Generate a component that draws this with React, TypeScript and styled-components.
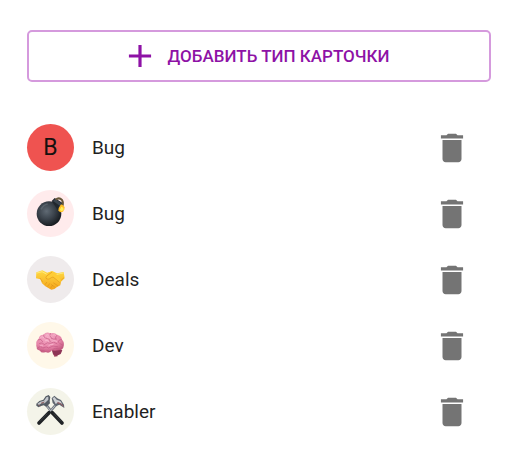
import React from "react";
import styled, { createGlobalStyle } from "styled-components";

const GlobalStyle = createGlobalStyle`
  *, *::before, *::after { box-sizing: border-box; }
  body {
    margin: 0;
    background: #fff;
    color: #1f1f1f;
    font-family: Roboto, "Liberation Sans", sans-serif;
  }
`;

const Page = styled.main`
  padding: 30px 24px 16px 27px;
`;

const AddButton = styled.button`
  display: flex;
  align-items: center;
  justify-content: center;
  gap: 9px;
  width: 100%;
  height: 52px;
  padding: 0 8px 0 0;
  border: 2px solid #d59add;
  border-radius: 5px;
  background: #fff;
  color: #8e12a6;
  font: 500 17px/24px Roboto, "Liberation Sans", sans-serif;
  text-transform: uppercase;
  cursor: pointer;
`;

const Icon = styled.svg`
  display: block;
  flex: none;
  width: 38px;
  height: 38px;
  fill: currentColor;
`;

const TypeList = styled.ul`
  display: flex;
  flex-direction: column;
  gap: 19px;
  margin: 42px 0 0;
  padding: 0;
  list-style: none;
`;

const TypeRow = styled.li`
  display: flex;
  align-items: center;
  height: 47px;
  padding-right: 20px;
`;

const Avatar = styled.span<{ $tint: string }>`
  display: flex;
  align-items: center;
  justify-content: center;
  flex: none;
  width: 47px;
  height: 47px;
  border-radius: 50%;
  background: ${(p) => p.$tint};
  color: #17110f;
  font-size: 23px;
  line-height: 47px;
`;

const Art = styled.svg`
  display: block;
  width: 47px;
  height: 47px;
`;

const TypeName = styled.span`
  flex: 1;
  margin-left: 18px;
  font-size: 19px;
  line-height: 28px;
`;

const DeleteButton = styled.button`
  flex: none;
  padding: 0;
  border: 0;
  background: none;
  color: #747474;
  cursor: pointer;
`;

const Bomb = () => (
  <Art viewBox="21 15 141 141" aria-hidden="true">
    <defs>
      <radialGradient id="bomb" cx="0.4" cy="0.4" r="0.65">
        <stop offset="0" stopColor="#606a74" />
        <stop offset="0.5" stopColor="#3b434c" />
        <stop offset="1" stopColor="#14181c" />
      </radialGradient>
    </defs>
    <circle cx="87" cy="86" r="37" fill="url(#bomb)" />
    <path d="M95 48 104 39 128 54 124 69 114 76Z" fill="#20262d" />
    <path d="M99 48 106 42 125 55 121 64Z" fill="#3a444e" />
    <path d="M107 44Q117 36 126 45 131 52 127 64" fill="none" stroke="#665638" strokeWidth="6" />
    <path d="m123 58 6 3 5 5-1 7-4 7-8 2-6-5 1-8Z" fill="#ffbd24" />
    <path d="m124 65 6 3 1 7-6 4-6-4Z" fill="#fff05d" />
    <path d="M63 73Q70 59 83 57" fill="none" stroke="#7e8993" strokeWidth="5" opacity=".35" />
  </Art>
);

const Handshake = () => (
  <Art viewBox="21 17 141 141" aria-hidden="true">
    <defs>
      <linearGradient id="hands" x2="0" y2="1">
        <stop stopColor="#ffda43" />
        <stop offset="1" stopColor="#f4a51c" />
      </linearGradient>
    </defs>
    <path d="M49 66 67 60 82 67 97 62 111 69 131 65 134 84 123 94 121 105 110 111 103 116 94 118 85 113 76 108 66 99 61 87 48 84Z" fill="url(#hands)" />
    <path d="M81 69 95 63 110 70 116 75 122 90 120 99 105 87 99 81 86 88 78 86 76 80Z" fill="#ffcc35" />
    <path d="M95 66 79 78Q76 82 80 86 87 89 94 82L99 80 120 97M76 102 80 96M83 108 89 100M92 113 98 105M101 98 113 106M94 103 105 111" fill="none" stroke="#de941a" strokeWidth="2" strokeLinecap="round" />
    <path d="M51 68 66 64 79 71M111 72 130 68" fill="none" stroke="#ffe979" strokeWidth="3" strokeLinecap="round" />
    <path d="m60 83 8 12M124 89l8-7" fill="none" stroke="#df9b1e" strokeWidth="2" />
  </Art>
);

const Brain = () => (
  <Art viewBox="21 19 141 141" aria-hidden="true">
    <defs>
      <radialGradient id="brain" cx="0.4" cy="0.25" r="0.8">
        <stop stopColor="#f6aec8" />
        <stop offset="0.6" stopColor="#e684a8" />
        <stop offset="1" stopColor="#bd5078" />
      </radialGradient>
    </defs>
    <path d="M96 104 106 103 113 122 103 123Z" fill="#a64b65" />
    <path d="M96 103 116 99 127 104 122 115 109 121 99 116Z" fill="#8f3557" />
    <path d="M49 86Q47 76 56 69 58 57 70 57 79 47 91 53 104 49 112 58 124 60 126 72 134 79 131 91 130 103 117 104 103 106 96 104 88 115 77 109 64 114 60 105 49 103 50 95Q48 91 49 86Z" fill="url(#brain)" />
    <path d="M55 72Q64 67 68 78M71 58Q70 67 80 68M91 53Q85 60 94 67M111 59Q104 62 108 71M125 72Q115 70 115 80M81 68Q90 68 91 78M94 68Q101 72 108 70M58 83Q67 78 73 86M53 97Q62 88 68 97M74 86Q82 78 91 83 100 75 111 84M70 96Q80 91 86 97 98 87 113 93M61 104Q71 102 77 108M98 102Q105 94 119 101M119 83 129 89" fill="none" stroke="#c25b83" strokeWidth="2" strokeLinecap="round" />
    <path d="M61 66Q66 60 71 65M79 58Q86 54 88 60M99 58Q104 55 107 60M76 75Q83 71 86 77M98 76Q104 73 110 77M61 90Q67 86 69 91M86 90Q92 84 99 86" fill="none" stroke="#fbc3d6" strokeWidth="2" strokeLinecap="round" />
  </Art>
);

const Hammers = () => (
  <Art viewBox="21 20 141 141" aria-hidden="true">
    <path d="M78 70 100 98M108 70 84 98" stroke="#737981" strokeWidth="8" />
    <path d="M79 73 97 95M107 71 86 95" stroke="#b8bcc2" strokeWidth="3" />
    <path d="m97 94 29 31M87 94 57 125" stroke="#202326" strokeWidth="11" strokeLinecap="round" />
    <path d="m102 97 20 22M81 98 61 119" stroke="#42474c" strokeWidth="2" strokeLinecap="round" />
    <path d="M49 67 58 59 70 55 77 45 86 41 91 47 89 59 90 66 79 76 71 72 61 75 56 78 49 73Z" fill="#555c64" />
    <path d="M52 67 61 61 72 58 80 47 85 46 85 55 74 66 66 66 56 71Z" fill="#c2c6cb" />
    <path d="M63 66 73 62M55 70 60 75" stroke="#8c5a5a" strokeWidth="3" />
    <path d="M95 51 103 43 112 51 123 56 132 70 133 80 118 70 108 75 98 65Z" fill="#5f666f" />
    <path d="M98 51 103 47 110 55 121 59 127 68 115 63 107 68Z" fill="#cdd0d4" />
    <path d="m112 64 10 3 8 8" fill="none" stroke="#a25a60" strokeWidth="3" />
  </Art>
);

const types = [
  { id: 1, name: "Bug", tint: "#ef5350", mark: "B" },
  { id: 2, name: "Bug", tint: "#ffebec", mark: <Bomb /> },
  { id: 3, name: "Deals", tint: "#efebec", mark: <Handshake /> },
  { id: 4, name: "Dev", tint: "#fff8e9", mark: <Brain /> },
  { id: 5, name: "Enabler", tint: "#f4f4e9", mark: <Hammers /> },
];

export default function App() {
  return (
    <>
      <GlobalStyle />
      <Page>
        <AddButton type="button">
          <Icon viewBox="0 0 24 24" aria-hidden="true">
            <path d="M19 13h-6v6h-2v-6H5v-2h6V5h2v6h6v2z" />
          </Icon>
          Добавить тип карточки
        </AddButton>
        <TypeList>
          {types.map((type) => (
            <TypeRow key={type.id}>
              <Avatar $tint={type.tint}>{type.mark}</Avatar>
              <TypeName>{type.name}</TypeName>
              <DeleteButton type="button" aria-label={`Удалить ${type.name}`}>
                <Icon viewBox="0 0 24 24" aria-hidden="true">
                  <path d="M6 19c0 1.1.9 2 2 2h8c1.1 0 2-.9 2-2V7H6v12zM19 4h-3.5l-1-1h-5l-1 1H5v2h14V4z" />
                </Icon>
              </DeleteButton>
            </TypeRow>
          ))}
        </TypeList>
      </Page>
    </>
  );
}
